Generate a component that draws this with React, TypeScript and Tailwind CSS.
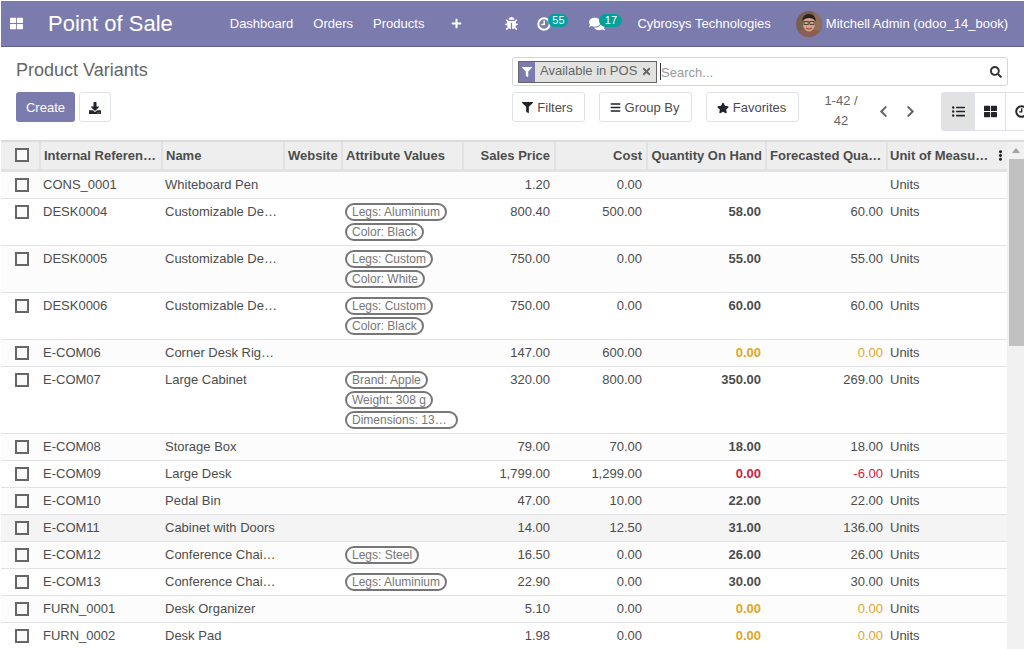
import React from "react";
import {
  FaThLarge, FaPlus, FaBug, FaComments, FaFilter, FaTimes, FaSearch,
  FaBars, FaStar, FaChevronLeft, FaChevronRight, FaListUl, FaEllipsisV, FaDownload,
} from "react-icons/fa";

interface Row {
  ref: string;
  name: string;
  attrs?: string[];
  price: string;
  cost: string;
  qty?: string;
  fore?: string;
  tone?: "warn" | "bad";
  hover?: boolean;
}

const rows: Row[] = [
  { ref: "CONS_0001", name: "Whiteboard Pen", price: "1.20", cost: "0.00" },
  { ref: "DESK0004", name: "Customizable Desk (CONFIG)", attrs: ["Legs: Aluminium", "Color: Black"], price: "800.40", cost: "500.00", qty: "58.00", fore: "60.00" },
  { ref: "DESK0005", name: "Customizable Desk (CONFIG)", attrs: ["Legs: Custom", "Color: White"], price: "750.00", cost: "0.00", qty: "55.00", fore: "55.00" },
  { ref: "DESK0006", name: "Customizable Desk (CONFIG)", attrs: ["Legs: Custom", "Color: Black"], price: "750.00", cost: "0.00", qty: "60.00", fore: "60.00" },
  { ref: "E-COM06", name: "Corner Desk Right Sit", price: "147.00", cost: "600.00", qty: "0.00", fore: "0.00", tone: "warn" },
  { ref: "E-COM07", name: "Large Cabinet", attrs: ["Brand: Apple", "Weight: 308 g", "Dimensions: 130 x 60 cm"], price: "320.00", cost: "800.00", qty: "350.00", fore: "269.00" },
  { ref: "E-COM08", name: "Storage Box", price: "79.00", cost: "70.00", qty: "18.00", fore: "18.00" },
  { ref: "E-COM09", name: "Large Desk", price: "1,799.00", cost: "1,299.00", qty: "0.00", fore: "-6.00", tone: "bad" },
  { ref: "E-COM10", name: "Pedal Bin", price: "47.00", cost: "10.00", qty: "22.00", fore: "22.00" },
  { ref: "E-COM11", name: "Cabinet with Doors", price: "14.00", cost: "12.50", qty: "31.00", fore: "136.00", hover: true },
  { ref: "E-COM12", name: "Conference Chair (CONFIG)", attrs: ["Legs: Steel"], price: "16.50", cost: "0.00", qty: "26.00", fore: "26.00" },
  { ref: "E-COM13", name: "Conference Chair (CONFIG)", attrs: ["Legs: Aluminium"], price: "22.90", cost: "0.00", qty: "30.00", fore: "30.00" },
  { ref: "FURN_0001", name: "Desk Organizer", price: "5.10", cost: "0.00", qty: "0.00", fore: "0.00", tone: "warn" },
  { ref: "FURN_0002", name: "Desk Pad", price: "1.98", cost: "0.00", qty: "0.00", fore: "0.00", tone: "warn" },
];

const Check = () => (
  <span className="block w-[14px] h-[14px] border-2 border-[#666] bg-[#fafafa] ml-[14px]" />
);

const Head = ({ children, right, fit }: { children: React.ReactNode; right?: boolean; fit?: boolean }) => (
  <th
    className={`h-[28px] border-r-2 border-[#e2e2e4] font-bold text-[#4c4c4c] ${right ? "text-right" : "text-left"} ${
      fit ? (right ? "pl-0 pr-[3px] whitespace-nowrap" : "pl-[3px] pr-0 whitespace-nowrap") : "pl-[3px] pr-[4px] truncate"
    }`}
  >
    {children}
  </th>
);

const ClockIcon = ({ className }: { className: string }) => (
  <svg viewBox="0 0 14 14" className={className} fill="none" stroke="currentColor">
    <circle cx="7" cy="7" r="5.7" strokeWidth="2.1" />
    <path d="M7.2 3.6V7.4H4.4" strokeWidth="1.5" />
  </svg>
);

const Avatar = () => (
  <svg width="26" height="26" viewBox="0 0 26 26" className="rounded-full">
    <rect width="26" height="26" fill="#75614f" />
    <rect x="18" width="8" height="26" fill="#8f6f5c" />
    <path d="M0 26V21q6-3 13-3t13 3v5z" fill="#8c5e56" />
    <ellipse cx="13" cy="13" rx="6" ry="7.5" fill="#d0a58c" />
    <path d="M6 10q1-7 7-7t7 7q-3-3-7-3t-7 3z" fill="#2a211d" />
    <rect x="8" y="10.5" width="4.2" height="3" fill="none" stroke="#3a2c26" strokeWidth="0.8" />
    <rect x="13.8" y="10.5" width="4.2" height="3" fill="none" stroke="#3a2c26" strokeWidth="0.8" />
    <path d="M10 17q3 2 6 0" fill="none" stroke="#a13f3a" strokeWidth="1.2" />
  </svg>
);

const Badge = ({ n, className }: { n: string; className: string }) => (
  <span className={`mt-[-7px] h-[13px] rounded-full bg-[#00a09d] text-white text-[11px] leading-[13px] text-center ${className}`}>{n}</span>
);

const Tool = ({ children, className }: { children: React.ReactNode; className: string }) => (
  <button className={`h-[30px] shrink-0 pt-[1px] flex items-center justify-center gap-[4px] bg-white border border-[#dee2e6] rounded-[3px] text-[#4c4c4c] ${className}`}>
    {children}
  </button>
);

export default function App() {
  return (
    <div
      className="h-[649px] w-[1024px] overflow-hidden bg-white pt-px pl-px flex flex-col text-[13px] text-[#4c4c4c]"
      style={{ fontFamily: '"Liberation Sans", Arial, sans-serif' }}
    >
      <nav className="h-[46px] shrink-0 bg-[#7c7bad] border-b border-[#5f5e97] flex items-center text-white">
        <FaThLarge className="ml-[9px] w-[13px] h-[13px]" />
        <span className="ml-[25px] text-[22px] leading-none">Point of Sale</span>
        <div className="ml-[57px] flex items-center gap-[20px]">
          <span>Dashboard</span>
          <span>Orders</span>
          <span>Products</span>
        </div>
        <FaPlus className="ml-[27px] w-[11px] h-[11px]" />
        <FaBug className="ml-[43px] w-[13px] h-[13px]" />
        <div className="ml-[19px] flex items-center">
          <ClockIcon className="w-[14px] h-[14px]" />
          <Badge n="55" className="ml-[-3px] w-[20px]" />
        </div>
        <div className="ml-[21px] flex items-center">
          <FaComments className="w-[16px] h-[16px]" />
          <Badge n="17" className="ml-[-6px] w-[23px]" />
        </div>
        <span className="ml-[15px]">Cybrosys Technologies</span>
        <div className="ml-[25px] flex items-center gap-[4px]">
          <Avatar />
          <span>Mitchell Admin (odoo_14_book)</span>
        </div>
      </nav>

      <div className="h-[95px] shrink-0 flex border-b-2 border-[#dcdcdc]">
        <div className="w-[511px] shrink-0 pl-[15px] pt-[13px]">
          <div className="text-[18px] leading-[20px] text-[#666]">Product Variants</div>
          <div className="mt-[12px] flex gap-[4px]">
            <button className="w-[59px] h-[30px] pt-[1px] bg-[#7c7bad] text-white rounded-[3px]">Create</button>
            <Tool className="w-[32px]"><FaDownload className="w-[12px] h-[12px] text-[#212529]" /></Tool>
          </div>
        </div>
        <div className="w-[512px] shrink-0 pt-[10px]">
          <div className="w-[496px] h-[29px] border border-[#d5d5d5] rounded-[3px] flex items-center pl-[5px] pr-[5px]">
            <span className="h-[22px] w-[139px] shrink-0 border border-[#666] bg-[#e2e2e0] flex items-center whitespace-nowrap">
              <span className="w-[16px] h-full bg-[#7c7bad] flex items-center justify-center">
                <FaFilter className="w-[10px] h-[10px] text-white" />
              </span>
              <span className="ml-[5px] -mt-[2px] text-[#666]">Available in POS</span>
              <FaTimes className="ml-[4px] w-[11px] h-[11px] text-[#666]" />
            </span>
            <span className="ml-[3px] h-[17px] border-l border-[#333] text-[#999] leading-[19px]">Search...</span>
            <FaSearch className="ml-auto w-[12px] h-[12px] text-[#333]" />
          </div>
          <div className="mt-[6px] flex items-start">
            <Tool className="w-[73px] pr-[2px]"><FaFilter className="w-[11px] h-[11px] text-[#212529]" />Filters</Tool>
            <Tool className="ml-[14px] w-[93px] pr-[2px]"><FaBars className="w-[11px] h-[11px] text-[#212529]" />Group By</Tool>
            <Tool className="ml-[14px] w-[93px] pr-[2px]"><FaStar className="w-[12px] h-[12px] text-[#212529]" />Favorites</Tool>
            <div className="ml-[24px] w-[36px] shrink-0 text-center leading-[20px] text-[#666] -mt-[1px]">1-42 / 42</div>
            <FaChevronLeft className="ml-[18px] mt-[13px] w-[13px] h-[13px] shrink-0 text-[#666]" />
            <FaChevronRight className="ml-[14px] mt-[13px] w-[13px] h-[13px] shrink-0 text-[#666]" />
            <div className="ml-[24px] h-[39px] shrink-0 flex border border-[#dee2e6] rounded-l-[3px] border-r-0">
              <span className="w-[33px] bg-[#e2e2e2] flex items-center justify-center border-r border-[#dee2e6]">
                <FaListUl className="w-[13px] h-[13px] text-[#212529]" />
              </span>
              <span className="w-[31px] flex items-center justify-center border-r border-[#dee2e6]">
                <FaThLarge className="w-[13px] h-[13px] text-[#212529]" />
              </span>
              <span className="w-[20px] flex items-center pl-[9px] overflow-hidden">
                <ClockIcon className="w-[13px] h-[13px] shrink-0 text-[#212529]" />
              </span>
            </div>
          </div>
        </div>
      </div>

      <div className="flex-1 flex min-h-0">
        <div className="w-[1006px] shrink-0 overflow-hidden">
          <table className="w-full table-fixed border-collapse">
            <colgroup>
              <col className="w-[39px]" />
              <col className="w-[122px]" />
              <col className="w-[122px]" />
              <col className="w-[58px]" />
              <col className="w-[121px]" />
              <col className="w-[92px]" />
              <col className="w-[92px]" />
              <col className="w-[119px]" />
              <col className="w-[121px]" />
              <col className="w-[120px]" />
            </colgroup>
            <thead>
              <tr className="bg-[#eeeeee] border-b-[3px] border-[#e0e2e6]">
                <th className="border-r-2 border-[#e2e2e4]"><Check /></th>
                <Head>Internal Reference</Head>
                <Head>Name</Head>
                <Head fit>Website</Head>
                <Head>Attribute Values</Head>
                <Head right>Sales Price</Head>
                <Head right>Cost</Head>
                <Head right fit>Quantity On Hand</Head>
                <Head>Forecasted Quantity</Head>
                <th className="h-[28px] pl-[2px] pr-[1px] text-left">
                  <div className="flex items-center justify-between font-bold">
                    <span className="whitespace-nowrap">Unit of Measu…</span>
                    <FaEllipsisV className="w-[11px] h-[11px] text-[#212529]" />
                  </div>
                </th>
              </tr>
            </thead>
            <tbody>
              {rows.map((r, i) => {
                const toneCls = r.tone === "warn" ? "text-[#e0a526]" : r.tone === "bad" ? "text-[#cc2244]" : "";
                const bg = r.hover ? "bg-[#f4f4f4]" : i % 2 === 0 ? "bg-[#fcfcfc]" : "";
                return (
                  <tr key={r.ref} className={`border-b border-[#e0e2e6] align-top ${bg}`}>
                    <td className={`pt-[6px] ${i === 0 ? "h-[28px]" : "h-[27px]"}`}><Check /></td>
                    <td className="pl-[3px] pr-[4px] pt-[4px] truncate leading-[18px]">{r.ref}</td>
                    <td className="pl-[3px] pr-[7px] pt-[4px] truncate leading-[18px]">{r.name}</td>
                    <td />
                    <td className="px-[3px] pt-[3px] pb-[3px]">
                      {r.attrs?.map((a) => (
                        <div key={a} className="h-[20px] flex items-center">
                          <span className="max-w-[113px] truncate h-[18px] px-[5px] leading-[15px] border-2 border-[#777] rounded-full text-[12px] text-[#777]">{a}</span>
                        </div>
                      ))}
                    </td>
                    <td className="pl-[3px] pr-[5px] pt-[4px] text-right leading-[18px]">{r.price}</td>
                    <td className="pl-[3px] pr-[5px] pt-[4px] text-right leading-[18px]">{r.cost}</td>
                    <td className={`pl-[3px] pr-[5px] pt-[4px] text-right leading-[18px] font-bold ${toneCls}`}>{r.qty}</td>
                    <td className={`pl-[3px] pr-[4px] pt-[4px] text-right leading-[18px] ${toneCls}`}>{r.fore}</td>
                    <td className="pl-[3px] pr-[4px] pt-[4px] leading-[18px]">Units</td>
                  </tr>
                );
              })}
            </tbody>
          </table>
        </div>
        <div className="flex-1 bg-[#f1f1f1] flex flex-col items-center">
          <span className="mt-[6px] w-0 h-0 border-x-[4px] border-x-transparent border-b-[5px] border-b-[#a3a3a3]" />
          <span className="mt-[6px] w-[15px] h-[187px] self-end bg-[#c1c1c1]" />
        </div>
      </div>
    </div>
  );
}
